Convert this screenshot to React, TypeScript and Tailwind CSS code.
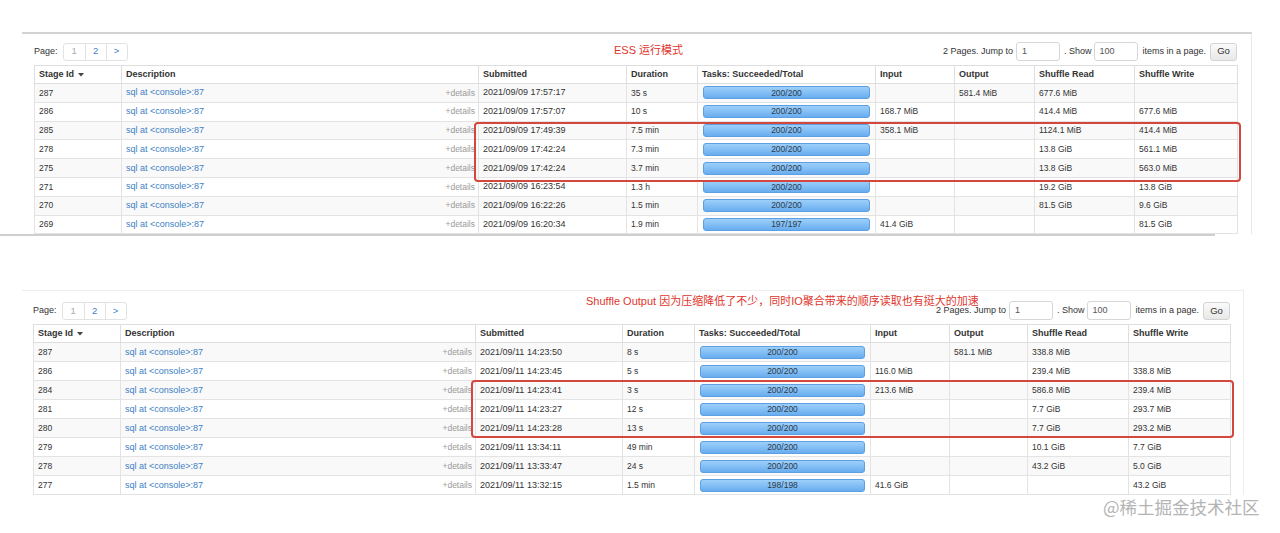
import React from "react";

type Row = {
  id: string;
  sub: string;
  dur: string;
  tasks: string;
  input: string;
  output: string;
  sread: string;
  swrite: string;
};

const topRows: Row[] = [
  { id: "287", sub: "2021/09/09 17:57:17", dur: "35 s", tasks: "200/200", input: "", output: "581.4 MiB", sread: "677.6 MiB", swrite: "" },
  { id: "286", sub: "2021/09/09 17:57:07", dur: "10 s", tasks: "200/200", input: "168.7 MiB", output: "", sread: "414.4 MiB", swrite: "677.6 MiB" },
  { id: "285", sub: "2021/09/09 17:49:39", dur: "7.5 min", tasks: "200/200", input: "358.1 MiB", output: "", sread: "1124.1 MiB", swrite: "414.4 MiB" },
  { id: "278", sub: "2021/09/09 17:42:24", dur: "7.3 min", tasks: "200/200", input: "", output: "", sread: "13.8 GiB", swrite: "561.1 MiB" },
  { id: "275", sub: "2021/09/09 17:42:24", dur: "3.7 min", tasks: "200/200", input: "", output: "", sread: "13.8 GiB", swrite: "563.0 MiB" },
  { id: "271", sub: "2021/09/09 16:23:54", dur: "1.3 h", tasks: "200/200", input: "", output: "", sread: "19.2 GiB", swrite: "13.8 GiB" },
  { id: "270", sub: "2021/09/09 16:22:26", dur: "1.5 min", tasks: "200/200", input: "", output: "", sread: "81.5 GiB", swrite: "9.6 GiB" },
  { id: "269", sub: "2021/09/09 16:20:34", dur: "1.9 min", tasks: "197/197", input: "41.4 GiB", output: "", sread: "", swrite: "81.5 GiB" },
];

const bottomRows: Row[] = [
  { id: "287", sub: "2021/09/11 14:23:50", dur: "8 s", tasks: "200/200", input: "", output: "581.1 MiB", sread: "338.8 MiB", swrite: "" },
  { id: "286", sub: "2021/09/11 14:23:45", dur: "5 s", tasks: "200/200", input: "116.0 MiB", output: "", sread: "239.4 MiB", swrite: "338.8 MiB" },
  { id: "284", sub: "2021/09/11 14:23:41", dur: "3 s", tasks: "200/200", input: "213.6 MiB", output: "", sread: "586.8 MiB", swrite: "239.4 MiB" },
  { id: "281", sub: "2021/09/11 14:23:27", dur: "12 s", tasks: "200/200", input: "", output: "", sread: "7.7 GiB", swrite: "293.7 MiB" },
  { id: "280", sub: "2021/09/11 14:23:28", dur: "13 s", tasks: "200/200", input: "", output: "", sread: "7.7 GiB", swrite: "293.2 MiB" },
  { id: "279", sub: "2021/09/11 13:34:11", dur: "49 min", tasks: "200/200", input: "", output: "", sread: "10.1 GiB", swrite: "7.7 GiB" },
  { id: "278", sub: "2021/09/11 13:33:47", dur: "24 s", tasks: "200/200", input: "", output: "", sread: "43.2 GiB", swrite: "5.0 GiB" },
  { id: "277", sub: "2021/09/11 13:32:15", dur: "1.5 min", tasks: "198/198", input: "41.6 GiB", output: "", sread: "", swrite: "43.2 GiB" },
];

const FONT = { fontFamily: '"Liberation Sans", Arial, "Noto Sans CJK SC", sans-serif' };

function Pager() {
  return (
    <div className="flex items-center gap-[5px]">
      <span className="text-[9px] text-[#333]">Page:</span>
      <div className="flex h-[18px] rounded-[3px] border border-[#e2e2e2] bg-white">
        <span className="flex w-[21px] items-center justify-center text-[9.5px] text-[#aaa]">1</span>
        <span className="flex w-[21px] items-center justify-center border-l border-[#e2e2e2] text-[9.5px] text-[#3d7fc6]">2</span>
        <span className="flex w-[21px] items-center justify-center border-l border-[#e2e2e2] text-[9.5px] text-[#3d7fc6]">&gt;</span>
      </div>
    </div>
  );
}

function Controls() {
  return (
    <div className="ml-auto flex items-center text-[9px] text-[#333]">
      <span>2 Pages. Jump to</span>
      <div className="ml-[3px] flex h-[19px] w-[44px] items-center rounded-[3px] border border-[#d6d6d6] bg-white pl-[5px] text-[#555]">1</div>
      <span className="ml-[4px]">. Show</span>
      <div className="ml-[3px] flex h-[19px] w-[44px] items-center rounded-[3px] border border-[#d6d6d6] bg-white pl-[4px] text-[#555]">100</div>
      <span className="ml-[4px]">items in a page.</span>
      <div className="ml-[4px] flex h-[18px] w-[27px] items-center justify-center rounded-[3px] border border-[#d4d4d4] bg-linear-to-b from-[#fafafa] to-[#e8e8e8] text-[9.5px] text-[#333]">Go</div>
    </div>
  );
}

function StageTable({ rows, widths, rowH }: { rows: Row[]; widths: string[]; rowH: string }) {
  const th = "border border-[#dedede] px-[4px] text-left text-[9px] font-bold text-[#333] h-[18px] whitespace-nowrap";
  const td = "border border-[#e3e3e3] px-[4px] text-[8.5px] text-[#333] whitespace-nowrap leading-none " + rowH;
  return (
    <table className="table-fixed border-collapse">
      <colgroup>
        {widths.map((w, i) => (
          <col key={i} className={w} />
        ))}
      </colgroup>
      <thead>
        <tr className="bg-white">
          <th className={th}>
            <span className="inline-flex items-center gap-[4px]">
              Stage Id
              <svg width="6" height="4" viewBox="0 0 6 4">
                <path d="M0 0 L6 0 L3 3.5 Z" fill="#444" />
              </svg>
            </span>
          </th>
          <th className={th}>Description</th>
          <th className={th}>Submitted</th>
          <th className={th}>Duration</th>
          <th className={th}>Tasks: Succeeded/Total</th>
          <th className={th}>Input</th>
          <th className={th}>Output</th>
          <th className={th}>Shuffle Read</th>
          <th className={th}>Shuffle Write</th>
        </tr>
      </thead>
      <tbody>
        {rows.map((r, i) => (
          <tr key={i} className={i % 2 === 0 ? "bg-[#f9f9f9]" : "bg-white"}>
            <td className={td}>{r.id}</td>
            <td className={td + " pr-[3px]"}>
              <div className="flex items-center justify-between">
                <span className="text-[9px] text-[#3d7fc6]">sql at &lt;console&gt;:87</span>
                <span className="text-[8.5px] text-[#9a9a9a]">+details</span>
              </div>
            </td>
            <td className={td + " text-[9px]"}>{r.sub}</td>
            <td className={td}>{r.dur}</td>
            <td className={td + " px-[5px]"}>
              <div className="flex h-[13px] items-center justify-center rounded-[3px] border border-[#5d9fe0] bg-linear-to-b from-[#9dd0fa] to-[#68adef] text-[8.5px] text-[#2d3a4a]">
                {r.tasks}
              </div>
            </td>
            <td className={td}>{r.input}</td>
            <td className={td}>{r.output}</td>
            <td className={td}>{r.sread}</td>
            <td className={td}>{r.swrite}</td>
          </tr>
        ))}
      </tbody>
    </table>
  );
}

export default function App() {
  return (
    <div className="relative h-[533px] w-[1280px] overflow-hidden bg-white" style={FONT}>
      {/* top screenshot */}
      <div className="relative ml-[22px] mt-[32px] w-[1230px] border-t-2 border-r border-t-[#d3d3d3] border-r-[#e8e8e8] pl-[12px] pt-[8px]">
        <div className="flex h-[19px] w-[1203px] items-center">
          <Pager />
          <Controls />
        </div>
        <div className="mt-[4px]">
          <StageTable
            rows={topRows}
            rowH="h-[18.8px]"
            widths={["w-[87px]", "w-[357px]", "w-[148px]", "w-[71px]", "w-[178px]", "w-[79px]", "w-[80px]", "w-[100px]", "w-[103px]"]}
          />
        </div>
        <span className="absolute left-[592px] top-[8px] text-[11px] text-[#e0362c]">ESS 运行模式</span>
        <div className="absolute left-[452px] top-[88px] h-[60px] w-[767px] rounded-[4px] border-2 border-[#d3473d]" />
      </div>
      <div className="h-[2px] w-[1215px] bg-[#cfcfcf]" />

      {/* bottom screenshot */}
      <div className="relative ml-[22px] mt-[54px] w-[1222px] border-t border-r border-[#eeeeee] pl-[11px] pt-[10px]">
        <div className="flex h-[19px] w-[1197px] items-center">
          <Pager />
          <Controls />
        </div>
        <div className="mt-[4px]">
          <StageTable
            rows={bottomRows}
            rowH="h-[19px]"
            widths={["w-[87px]", "w-[355px]", "w-[147px]", "w-[72px]", "w-[176px]", "w-[79px]", "w-[78px]", "w-[101px]", "w-[102px]"]}
          />
        </div>
        <span className="absolute left-[564px] top-[2px] text-[11px] text-[#e0362c]">
          Shuffle Output 因为压缩降低了不少，同时IO聚合带来的顺序读取也有挺大的加速
        </span>
        <div className="absolute left-[449px] top-[89px] h-[58px] w-[763px] rounded-[4px] border-2 border-[#d3473d]" />
      </div>

      <span
        className="absolute left-[1103px] top-[494px] text-[17.5px] text-[#b4b4b4]"
        style={{ fontFamily: '"Noto Sans CJK SC", "Liberation Sans", sans-serif' }}
      >
        @稀土掘金技术社区
      </span>
    </div>
  );
}
